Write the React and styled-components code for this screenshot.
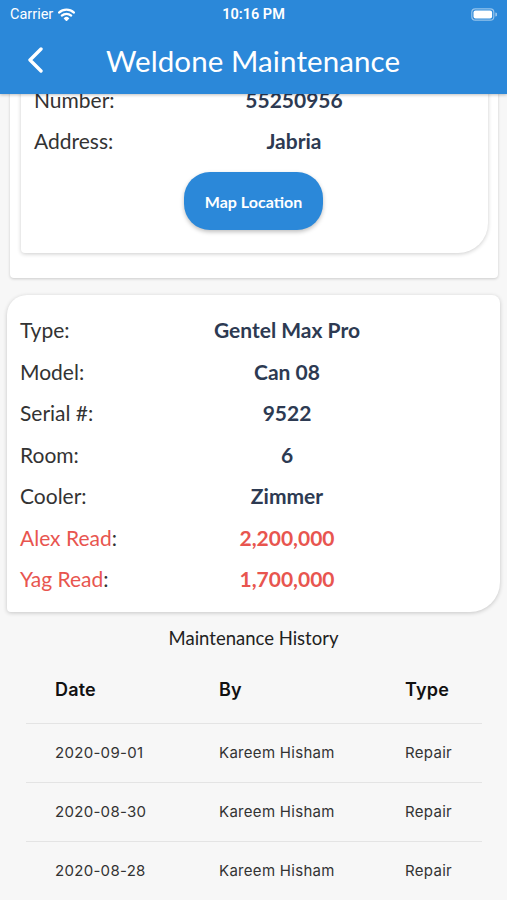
import React from "react";
import styled, { createGlobalStyle } from "styled-components";

const GlobalStyle = createGlobalStyle`
  html, body {
    margin: 0;
    padding: 0;
    background: #f7f7f7;
  }
  * {
    box-sizing: border-box;
  }
`;

const Page = styled.div`
  width: 507px;
  height: 900px;
  overflow: hidden;
  background: #f7f7f7;
  font-family: Lato, "Open Sans", sans-serif;
`;

const Header = styled.header`
  position: relative;
  z-index: 2;
  height: 94px;
  background: #2b88d9;
  color: #ffffff;
  box-shadow: 0 1px 3px rgba(0, 0, 0, 0.25);
`;

const StatusBar = styled.div`
  height: 28px;
  display: flex;
  align-items: center;
  justify-content: space-between;
  padding: 0 10px;
  font-family: Roboto, "Liberation Sans", sans-serif;
  font-size: 14.5px;
`;

const Carrier = styled.div`
  display: flex;
  align-items: center;
  gap: 5px;
  width: 110px;
`;

const Clock = styled.div`
  font-weight: 600;
  font-size: 14.5px;
`;

const Battery = styled.div`
  width: 110px;
  display: flex;
  justify-content: flex-end;
`;

const TitleBar = styled.div`
  height: 66px;
  display: flex;
  align-items: center;
  padding-left: 27px;
  padding-bottom: 2px;
`;

const BackButton = styled.div`
  width: 20px;
  height: 26px;
  display: flex;
  align-items: center;
`;

const Title = styled.h1`
  margin: 0 0 0 59px;
  font-size: 29.5px;
  font-weight: 400;
  letter-spacing: 0.1px;
`;

const Body = styled.main`
  margin-top: -20px;
`;

const OuterCard = styled.section`
  margin: 0 9px 0 10px;
  padding: 0 10px 25px 11px;
  background: #ffffff;
  border-radius: 0 0 4px 4px;
  box-shadow: 0 1px 3px rgba(0, 0, 0, 0.18);
`;

const InnerCard = styled.div`
  padding: 5px 0 23px 13px;
  background: #ffffff;
  border-radius: 0 0 30px 4px;
  box-shadow: 0 1px 4px rgba(0, 0, 0, 0.2);
`;

const InfoRow = styled.div`
  display: grid;
  grid-template-columns: ${(p) => p.$cols};
  align-items: center;
  height: ${(p) => p.$h}px;
  font-size: 21px;
`;

const Label = styled.span`
  color: ${(p) => (p.$alert ? "#e8554f" : "#333333")};

  b {
    font-weight: 400;
    color: #333333;
  }
`;

const Value = styled.span`
  text-align: center;
  font-weight: 700;
  color: ${(p) => (p.$alert ? "#e8554f" : "#2d3a52")};
`;

const MapButton = styled.button`
  display: block;
  margin: 11px auto 0 150px;
  width: 139px;
  height: 58px;
  border: none;
  border-radius: 26px;
  background: #2b88d9;
  color: #ffffff;
  font-family: Lato, "Open Sans", sans-serif;
  font-size: 16px;
  font-weight: 700;
  box-shadow: 0 2px 4px rgba(0, 0, 0, 0.25);
`;

const DeviceCard = styled.section`
  margin: 17px 7px 0 7px;
  padding: 14px 0 12px 13px;
  background: #ffffff;
  border-radius: 20px 8px 30px 4px;
  box-shadow: 0 1px 4px rgba(0, 0, 0, 0.2);
`;

const SectionTitle = styled.h2`
  margin: 15px 0 0;
  text-align: center;
  font-size: 18.5px;
  font-weight: 400;
  color: #222222;
`;

const Table = styled.div`
  margin: 7px 25px 0 26px;
  font-family: Inter, Roboto, "Liberation Sans", sans-serif;
`;

const TableRow = styled.div`
  display: grid;
  grid-template-columns: 164px 186px 1fr;
  align-items: center;
  padding-left: 29px;
  height: ${(p) => (p.$head ? 68 : 59)}px;
  border-bottom: 1px solid #e4e4e4;
  font-size: ${(p) => (p.$head ? 18 : 15)}px;
  font-weight: ${(p) => (p.$head ? 600 : 400)};
  letter-spacing: ${(p) => (p.$head ? 0.2 : 0.3)}px;
  color: ${(p) => (p.$head ? "#111111" : "#333333")};
`;

const site = [
  { label: "Number", value: "55250956" },
  { label: "Address", value: "Jabria" },
];

const device = [
  { label: "Type", value: "Gentel Max Pro" },
  { label: "Model", value: "Can 08" },
  { label: "Serial #", value: "9522" },
  { label: "Room", value: "6" },
  { label: "Cooler", value: "Zimmer" },
  { label: "Alex Read", value: "2,200,000", alert: true },
  { label: "Yag Read", value: "1,700,000", alert: true },
];

const history = [
  { date: "2020-09-01", by: "Kareem Hisham", type: "Repair" },
  { date: "2020-08-30", by: "Kareem Hisham", type: "Repair" },
  { date: "2020-08-28", by: "Kareem Hisham", type: "Repair" },
];

const Wifi = () => (
  <svg width="17" height="13" viewBox="0 0 17 13">
    <path d="M1 4.6 A11 11 0 0 1 16 4.6" stroke="#fff" strokeWidth="2.2" fill="none" strokeLinecap="round" />
    <path d="M3.8 7.6 A7 7 0 0 1 13.2 7.6" stroke="#fff" strokeWidth="2.2" fill="none" strokeLinecap="round" />
    <path d="M6.4 10.4 A3.2 3.2 0 0 1 10.6 10.4 L8.5 12.6 Z" fill="#fff" stroke="#fff" strokeWidth="1.2" strokeLinejoin="round" />
  </svg>
);

const BatteryIcon = () => (
  <svg width="26" height="13" viewBox="0 0 26 13">
    <rect x="0.8" y="0.8" width="22" height="11.4" rx="3.5" fill="none" stroke="rgba(255,255,255,0.5)" strokeWidth="1.2" />
    <rect x="2.5" y="2.5" width="18.6" height="8" rx="2" fill="#fff" />
    <path d="M24.3 4.5 a2 2 0 0 1 0 4 z" fill="rgba(255,255,255,0.5)" />
  </svg>
);

const Chevron = () => (
  <svg width="17" height="26" viewBox="0 0 17 26">
    <path d="M14 2 L3 13 L14 24" stroke="#fff" strokeWidth="3.4" fill="none" strokeLinecap="round" strokeLinejoin="round" />
  </svg>
);

export default function App() {
  return (
    <Page>
      <GlobalStyle />
      <Header>
        <StatusBar>
          <Carrier>
            Carrier <Wifi />
          </Carrier>
          <Clock>10:16 PM</Clock>
          <Battery>
            <BatteryIcon />
          </Battery>
        </StatusBar>
        <TitleBar>
          <BackButton>
            <Chevron />
          </BackButton>
          <Title>Weldone Maintenance</Title>
        </TitleBar>
      </Header>

      <Body>
        <OuterCard>
          <InnerCard>
            {site.map((row) => (
              <InfoRow key={row.label} $cols="150px 220px" $h={41}>
                <Label>{row.label}:</Label>
                <Value>{row.value}</Value>
              </InfoRow>
            ))}
            <MapButton>Map Location</MapButton>
          </InnerCard>
        </OuterCard>

        <DeviceCard>
          {device.map((row) => (
            <InfoRow key={row.label} $cols="160px 214px" $h={41.5}>
              <Label $alert={row.alert}>
                {row.label}
                <b>:</b>
              </Label>
              <Value $alert={row.alert}>{row.value}</Value>
            </InfoRow>
          ))}
        </DeviceCard>

        <SectionTitle>Maintenance History</SectionTitle>
        <Table>
          <TableRow $head>
            <span>Date</span>
            <span>By</span>
            <span>Type</span>
          </TableRow>
          {history.map((h) => (
            <TableRow key={h.date}>
              <span>{h.date}</span>
              <span>{h.by}</span>
              <span>{h.type}</span>
            </TableRow>
          ))}
        </Table>
      </Body>
    </Page>
  );
}
